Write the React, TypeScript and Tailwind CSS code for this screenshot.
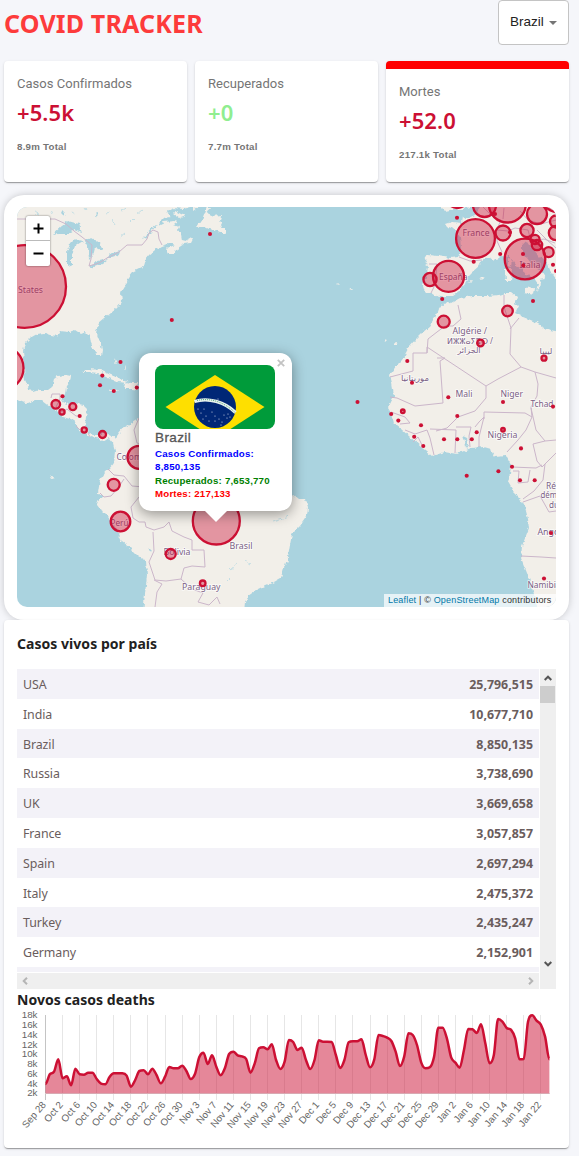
import React from "react";

const stats = [
  { title: "Casos Confirmados", value: "+5.5k", total: "8.9m Total", color: "text-[#cc1034]", active: false },
  { title: "Recuperados", value: "+0", total: "7.7m Total", color: "text-[#90ee90]", active: false },
  { title: "Mortes", value: "+52.0", total: "217.1k Total", color: "text-[#cc1034]", active: true },
];

const countries: [string, string][] = [
  ["USA", "25,796,515"],
  ["India", "10,677,710"],
  ["Brazil", "8,850,135"],
  ["Russia", "3,738,690"],
  ["UK", "3,669,658"],
  ["France", "3,057,857"],
  ["Spain", "2,697,294"],
  ["Italy", "2,475,372"],
  ["Turkey", "2,435,247"],
  ["Germany", "2,152,901"],
];

const LAND = [
  // North and Central America
  "M10 200L205 200L204 207L191 207L183 209L174 208L167 211L170 217L164 218L158 224L153 227L147 234L143 240L147 238L150 233L156 226L164 222L174 221L178 222L174 225L179 227L177 231L181 234L182 240L186 241L188 237L193 239L191 243L184 244L178 248L174 254L168 254L166 250L170 246L175 244L168 244L162 246L155 250L149 255L146 259L144 266L138 269L132 272L128 277L127 282L123 287L121 293L122 301L117 307L110 313L104 318L98 323L96 332L100 342L102 350L101 356L97 356L94 350L91 343L90 336L86 332L81 334L75 330L69 332L60 331L57 336L51 335L45 333L37 334L30 338L25 343L23 352L24 360L24 370L25 380L29 388L33 392L39 390L48 390L52 387L54 379L58 376L66 375L71 376L70 382L67 386L66 394L63 398L62 402L67 404L75 403L83 405L87 409L86 417L85 425L88 432L94 435L100 433L107 433L113 436L115 439L119 433L123 428L127 426L133 422L139 418L180 415L292 494L298 499L305 499L308 507L307 516L300 526L292 534L290 545L288 557L284 568L281 578L274 582L263 587L255 591L248 596L245 602L244 612L143 612L145 594L147 575L146 561L139 557L130 548L122 542L117 530L111 520L104 513L97 504L99 499L103 497L98 493L100 480L105 472L109 469L114 463L115 451L113 443L109 438L103 442L99 439L91 437L86 433L80 431L76 423L70 419L63 417L57 410L50 407L42 401L35 401L27 404L17 400L10 400Z",
  // Europe
  "M480 200L480 208L475 215L466 219L463 217L462 223L452 222L446 224L448 227L455 230L460 237L461 249L458 257L450 258L438 256L428 255L425 260L428 266L427 275L423 286L425 293L432 293L438 297L444 296L453 296L460 291L464 285L466 278L471 273L479 266L482 260L487 257L496 260L503 255L509 256L515 265L522 267L527 275L534 278L538 284L536 291L541 285L540 279L546 278L541 271L535 268L527 258L522 252L522 245L528 242L532 248L540 257L547 262L550 270L556 279L565 280L565 200Z",
  // Africa
  "M442 304L451 303L460 298L472 296L487 296L499 295L506 293L512 293L517 297L515 304L518 307L515 313L523 317L533 321L543 327L550 330L565 333L565 612L538 612L533 590L527 573L521 558L522 546L529 528L528 519L525 507L520 498L513 491L508 482L510 474L511 465L506 456L495 457L490 449L483 447L471 448L457 454L445 452L432 456L421 447L410 437L401 429L393 423L391 413L388 408L394 396L392 383L390 375L396 366L402 360L409 347L416 339L422 333L430 326L435 318L438 310Z",
  // Islands
  "M197 227L203 218L207 207L211 207L207 213L214 216L221 215L220 221L223 224L221 228L226 228L226 235L222 233L216 230L209 229L205 227Z",
  "M193 206L197 207L193 210Z M175 211L185 216L180 218L173 213Z M198 208L193 207L190 203L199 200Z",
  "M82 372L88 369L100 370L111 375L121 379L130 383L118 382L108 378L98 373L89 372Z",
  "M125 383L138 383L139 390L132 389L124 389Z M110 389L118 390L115 392L109 391Z",
  "M505 269L512 269L511 281L506 281Z M508 258L512 259L511 267L508 265Z M525 289L535 288L534 295L525 293Z",
  "M441 207L445 211L455 209L464 209L469 207L469 200L441 200Z",
  "M114 361L115 358L117 364Z M125 364L126 368L124 370Z M467 283L472 280L473 281Z M478 280L483 277L484 279Z",
  "M50 478L52 475L54 479L51 480Z M336 284L338 283L340 285Z M349 289L353 289L352 290Z M384 341L386 339L387 342Z M395 342L399 345L395 345Z",
].join(" ");

const WATER = [
  "M52 235L62 226L68 221L79 224L82 233L74 230L68 234L59 234Z",
  "M67 266L67 252L70 244L75 239L83 241L75 246L72 255L72 264Z",
  "M84 240L92 238L100 243L103 250L95 248L93 256L89 260L88 247Z",
  "M88 266L98 261L108 259L102 264L90 268Z",
  "M106 258L110 254L120 251L118 256L112 258Z",
  "M62 211L65 214L64 216L61 213Z M95 215L97 218L98 212Z M32 223L34 229L32 233Z",
  "M463 436L467 438L468 445L466 448L465 441Z M148 547L152 551L150 552Z",
].join(" ");

const BORDERS = [
  "M17 219L55 219L66 224L74 231L82 237L92 245L91 259L89 266L99 263L107 258L119 252L127 245L142 245L147 239L149 233L153 230L158 232L159 239L162 245",
  "M51 398L52 394L60 394L60 399L56 407L62 412M62 412L67 409L76 416L80 416M76 426L80 430M88 433L90 437",
  "M139 418L134 430L137 443L148 446M108 469L114 475L124 476L132 486L144 487M124 479L118 488L111 496L104 497L100 493M139 497L131 507L133 518L139 522L145 522L146 527L154 530M154 530L164 527L169 522L172 531L184 537L192 540L192 550L204 550L205 567L192 566L184 568L181 579L166 581L155 580L149 562L154 551L153 532",
  "M154 580L162 584L157 592L155 607M181 579L192 589L203 593L198 602L209 605L217 597L220 604",
  "M459 257L470 261L482 260M429 264L437 264L435 285L431 293M483 207L494 218L501 220L496 231L497 241L502 252M497 230L508 231L515 228L528 230L531 241M520 211L528 220L541 224L556 220M537 230L547 240L556 248M531 241L544 239L555 243M504 208L503 219",
  "M458 305L461 319L453 326L445 326L437 332L428 339L427 353L413 353L413 371L390 377M427 347L486 386L498 379L521 367L535 372L556 378M504 295L504 307L511 328L510 354L521 367M510 329L519 318M427 353L427 347",
  "M437 358L445 358L440 361L443 403L415 406L397 398M486 386L486 398L475 411L458 417L447 428L436 431M397 398L390 397M391 412L405 417L410 423L400 424M405 430L415 434L427 430L430 438L434 455M413 442L418 437L423 447M430 429L456 430L455 453M456 427L471 427L469 436L470 447M475 427L479 422L484 417L479 437L479 447M484 419L484 412L525 413L532 417L526 430L518 440L507 452M532 417L531 407L537 396L538 384L535 372",
  "M531 408L536 430L545 441L556 440M545 441L533 444L537 461L542 467L556 453M512 467L536 468L542 465M513 471L519 471L518 483L528 482L530 470M523 502L540 496L544 503L549 512L556 511M521 556L541 557L556 558M545 464L543 480L534 491L523 499",
].join(" ");

// x, y, radius
const circles: [number, number, number][] = [
  [24.7, 286.5, 41.3], [1.3, 368, 22.2], [216.3, 521, 23.5], [139, 457.3, 11.5], [113.7, 484.8, 6],
  [120.5, 521.5, 9.8], [170.7, 554, 5], [202.7, 583.3, 2.8], [55.8, 404.3, 4.3], [62, 412, 2.6],
  [72.8, 406.7, 3.5], [84.2, 430, 2.6], [102.5, 434.5, 3.5], [475.5, 238.5, 19.4], [448.5, 276.3, 15.5],
  [430, 279.5, 6.6], [525, 259, 20.3], [507.3, 204, 18.5], [484.5, 205.5, 11.5], [503, 233, 7.5],
  [457.3, 197, 11], [537, 214, 10], [527, 230.5, 6.6], [535, 239.5, 4.6], [537, 245, 5.2],
  [548.6, 252.2, 5], [556, 233, 7.2], [556, 221.5, 6], [562, 187, 26], [443.7, 321.7, 6],
  [507.5, 311, 5.3], [480.5, 343, 3.3], [544, 358.2, 2.5], [402.8, 411.3, 1.8], [503, 429.8, 1.8],
];

const dots: [number, number][] = [
  [210, 234], [171.8, 320], [120.5, 362], [102.3, 375.6], [100, 385.3], [113.8, 391], [136.8, 387.6],
  [62.5, 396.2], [79.7, 416], [357.5, 402], [457, 217.8], [495, 214], [500.2, 254], [523, 254],
  [523.3, 265.6], [473.7, 261.8], [442.2, 299], [533, 301], [553, 264.8], [556, 271], [407.3, 361],
  [412, 382.8], [448.3, 397.3], [391.2, 414], [398.3, 420.6], [421, 425.3], [457.3, 416], [414.2, 436.8],
  [423.3, 446], [444, 439.2], [457.3, 439.2], [471.8, 439.2], [476.7, 432.3], [503, 402], [553, 406.6],
  [521, 448.4], [512, 466.7], [498.4, 471.3], [466.7, 475.8], [520, 480.3], [534.7, 480.3],
  [551, 533], [544, 578.5], [510, 232.2],
];

// label, x, baseline, width
const labels: [string, number, number, number][] = [
  ["States", 18, 292.5, 25], ["France", 462.5, 236, 27], ["España", 439, 279.5, 28.5], ["Italia", 519.5, 268, 21],
  ["Algérie /", 452.5, 334, 34.5], ["Mali", 455.5, 397, 17], ["Niger", 500.5, 397, 22.5], ["Tchad", 530.5, 407, 23],
  ["Nigeria", 487.5, 438, 30], ["Ré", 546, 488.5, 10], ["dém", 540.5, 498, 16.5], ["du", 549, 507.5, 10],
  ["Angola", 537.5, 534.5, 29], ["Namibia", 527.5, 587.5, 33], ["Colombia", 116.5, 460, 37], ["Perú", 110.5, 526, 18],
  ["Bolivia", 163.5, 555, 27], ["Paraguay", 182, 589.5, 38.5], ["Brasil", 229.5, 549, 23],
];

function WorldMap() {
  return (
    <svg viewBox="17 207 539 400" width="539" height="400" className="block">
      <defs>
        <filter id="coast" x="0" y="0" width="1" height="1">
          <feTurbulence type="fractalNoise" baseFrequency="0.22" numOctaves="2" seed="4" />
          <feDisplacementMap in="SourceGraphic" scale="5" xChannelSelector="R" yChannelSelector="G" />
        </filter>
      </defs>
      <rect x="17" y="207" width="539" height="400" fill="#aad3df" />
      <g filter="url(#coast)">
        <path d={LAND} fill="#f2efe9" />
        <path d={WATER} fill="#aad3df" />
        <path d="M35 212l5 2M50 210l2 4M72 212l3 2M85 208l2 3M105 214l4-2M112 220l3 5M122 210l5-3M130 222l4-4M137 214l5-4M120 237l4-3M273 522l7-2l9-3M225 582l6-6M230 570l8-7M244 560l6 4" stroke="#b7d9e2" strokeWidth="0.8" fill="none" />
      </g>
      <path d={BORDERS} fill="none" stroke="#cbb6ca" strokeWidth="1" strokeLinejoin="round" />
      <g fill="#7b5f85" stroke="#fff" strokeOpacity="0.7" strokeWidth="1.6" paintOrder="stroke" fontSize="8" fontFamily='"Noto Sans", "DejaVu Sans", sans-serif'>
        {labels.map(([t, x, y, w]) => (
          <text key={t} x={x} y={y} textLength={w} lengthAdjust="spacingAndGlyphs">{t}</text>
        ))}
        <text x="447" y="343.5" textLength="46" lengthAdjust="spacingAndGlyphs">ⵍⵣⵣⴰⵢⴻⵔ /</text>
        <text x="469" y="353" textAnchor="middle" fontFamily='"DejaVu Sans", sans-serif' fontSize="8">الجزائر</text>
        <text x="546" y="354" textAnchor="middle" fontFamily='"DejaVu Sans", sans-serif' fontSize="8.500">ليبيا</text>
        <text x="415" y="381" textAnchor="middle" fontFamily='"DejaVu Sans", sans-serif' fontSize="8.500">موريتانيا</text>
      </g>
      <g fill="#cc1034" fillOpacity="0.4" stroke="#cc1034" strokeWidth="2.3">
        {circles.map(([x, y, r], i) => <circle key={i} cx={x} cy={y} r={r} />)}
      </g>
      <g fill="#cc1034">
        {dots.map(([x, y], i) => <circle key={i} cx={x} cy={y} r="2.05" />)}
      </g>
    </svg>
  );
}

function Flag() {
  return (
    <svg width="120" height="64" viewBox="0 0 120 64" className="block rounded-[8px]">
      <rect width="120" height="64" fill="#009b3a" />
      <path d="M60 10L109.500 42L60 74L10.500 42Z" fill="#fedf00" />
      <circle cx="60" cy="42" r="21" fill="#002776" />
      <path d="M39.500 36.500C53 32 70 37 80.500 47.500" fill="none" stroke="#e8f3ee" strokeWidth="3.2" />
      <path d="M42 35.500C55 32.500 69 37 79.500 47" fill="none" stroke="#56a883" strokeWidth="1" strokeDasharray="1 1" />
      <g fill="#d7deed">
        {[[43, 44], [46, 48], [49, 44], [51, 51], [54, 56], [57, 47], [60, 51], [60, 56], [64, 54], [67, 57], [69, 50], [73, 49], [72, 53], [75, 52], [66, 60], [63, 34], [48, 54]].map(([x, y]) => (
          <circle key={`${x}-${y}`} cx={x} cy={y} r="0.6" />
        ))}
      </g>
    </svg>
  );
}

function Popup() {
  return (
    <div className="absolute left-[122px] top-[146px] h-[170px] w-[153px]">
      <div className="relative h-[158px] rounded-[12px] bg-white px-4 pt-[12px] shadow-[0_3px_14px_rgba(0,0,0,0.4)]">
        <svg className="absolute right-[7px] top-[6px]" width="8" height="8" viewBox="0 0 8 8">
          <path d="M0.800 0.800L7.200 7.200M7.200 0.800L0.800 7.200" stroke="#c3c3c3" strokeWidth="1.8" />
        </svg>
        <Flag />
        <div className="whitespace-nowrap font-['Liberation_Sans',sans-serif] font-bold">
          <div className="h-[18px] text-[13.500px] font-medium leading-[17px] tracking-[0.400px] text-[#555] [-webkit-text-stroke:0.300px_#555]">Brazil</div>
          <div className="text-[9.700px] leading-[13px] tracking-[0.240px] text-[#00f]">Casos Confirmados:<br />8,850,135</div>
          <div className="pt-[1px] text-[9.700px] leading-[13px] tracking-[0.200px] text-[#008000]">Recuperados: 7,653,770</div>
          <div className="text-[9.700px] leading-[13px] tracking-[0.200px] text-[#f00]">Mortes: 217,133</div>
        </div>
      </div>
      <div className="absolute left-[65px] top-[157px] h-[12px] w-[24px] bg-white [clip-path:polygon(0_0,100%_0,50%_100%)]" />
    </div>
  );
}

// Vertical plot positions, one per day from Sep 28, in thirds of a pixel.
const series = [
  372, 343, 335, 298, 355, 349, 376, 326, 343, 344, 338, 338, 357, 371, 373, 351, 340, 340, 340, 347,
  380, 360, 333, 331, 343, 326, 345, 370, 350, 321, 325, 325, 317, 333, 357, 342, 292, 278, 312, 286,
  320, 346, 325, 282, 275, 286, 289, 297, 338, 310, 265, 262, 268, 253, 300, 327, 305, 240, 246, 270,
  263, 300, 327, 300, 241, 245, 245, 246, 285, 324, 300, 247, 244, 244, 238, 285, 322, 298, 225, 228,
  233, 243, 275, 318, 290, 220, 225, 255, 308, 325, 322, 290, 203, 203, 235, 292, 308, 323, 270, 207,
  208, 219, 193, 250, 310, 285, 177, 185, 204, 209, 235, 298, 297, 185, 166, 182, 194, 230, 298,
];
const STEP = 4.27;
const points = series.map((v, i) => [28.5 + i * STEP, v / 3 - 50]);

function smoothPath(p: number[][]) {
  const tangent = (i: number) => {
    if (i === 0 || i === p.length - 1) return 0;
    const a = p[i][1] - p[i - 1][1];
    const b = p[i + 1][1] - p[i][1];
    if (a * b <= 0) return 0;
    const m = (a + b) / 2;
    return Math.sign(m) * Math.min(Math.abs(m), 3 * Math.abs(a), 3 * Math.abs(b));
  };
  let d = `M${p[0][0]} ${p[0][1]}`;
  for (let i = 0; i < p.length - 1; i++) {
    const [x, y] = p[i];
    const [u, v] = p[i + 1];
    d += `C${x + STEP / 3} ${y + tangent(i) / 3} ${u - STEP / 3} ${v - tangent(i + 1) / 3} ${u} ${v}`;
  }
  return d;
}

const days = [
  "Sep 28", "Oct 2", "Oct 6", "Oct 10", "Oct 14", "Oct 18", "Oct 22", "Oct 26", "Oct 30", "Nov 3",
  "Nov 7", "Nov 11", "Nov 15", "Nov 19", "Nov 23", "Nov 27", "Dec 1", "Dec 5", "Dec 9", "Dec 13",
  "Dec 17", "Dec 21", "Dec 25", "Dec 29", "Jan 2", "Jan 6", "Jan 10", "Jan 14", "Jan 18", "Jan 22",
];

function Chart() {
  const line = smoothPath(points);
  return (
    <svg width="539" height="130" viewBox="0 0 539 130" className="block overflow-visible">
      {days.map((d, i) => (
        <rect key={d} x={Math.round(28 + i * STEP * 4)} y="5" width="1" height="85" fill={i ? "#e6e6e6" : "#c4c4c4"} />
      ))}
      <rect x="28" y="83" width="505" height="1" fill="#ddd" />
      <path d={`${line}L532.400 83.500L28.500 83.500Z`} fill="#cc1034" fillOpacity="0.5" />
      <path d={line} fill="none" stroke="#cc1034" strokeWidth="2.5" strokeLinejoin="round" />
      <g fill="#666" fontSize="9.800" fontFamily='"Liberation Sans", Arial, sans-serif'>
        {[18, 16, 14, 12, 10, 8, 6, 4, 2].map((k, i) => (
          <text key={k} x="20.500" y={8.3 + i * 9.75} textAnchor="end">{k}k</text>
        ))}
        {days.map((d, i) => (
          <text key={d} textAnchor="end" transform={`translate(${29.5 + i * STEP * 4} 95) rotate(-50)`}>{d}</text>
        ))}
      </g>
    </svg>
  );
}

function Chevron({ className }: { className: string }) {
  return (
    <svg width="8" height="6" viewBox="0 0 8 6" className={className} fill="none" stroke="currentColor" strokeWidth="2">
      <path d="M0.700 5L4 1.700L7.300 5" />
    </svg>
  );
}

const paper = "rounded-[4px] bg-white shadow-[0_2px_1px_-1px_rgba(0,0,0,0.2),0_1px_1px_0_rgba(0,0,0,0.14),0_1px_3px_0_rgba(0,0,0,0.12)]";

export default function App() {
  return (
    <div className="h-[1156px] w-[579px] overflow-hidden bg-[#f5f6fa] pl-1 pr-[10px] font-['Noto_Sans',sans-serif]">
      <header className="flex h-[45px] items-start justify-between">
        <h1 className="pt-[5px] text-[25px] font-bold leading-[36px] tracking-[0.170px] text-[#fd3b3b]">COVID TRACKER</h1>
        <div className="flex h-[45px] w-[71px] items-center rounded-[4px] border border-[#c4c4c4] bg-white pl-[11px] font-['Liberation_Sans',sans-serif] text-[13.500px] text-[#222]">
          <span className="w-[39px]">Brazil</span>
          <svg width="8" height="4" viewBox="0 0 8 4"><path d="M0 0H8L4 4Z" fill="#757575" /></svg>
        </div>
      </header>

      <section className="mt-4 grid grid-cols-3 gap-2">
        {stats.map((s) => (
          <article key={s.title} className={`h-[121px] overflow-hidden px-[13px] pt-[14px] ${paper} ${s.active ? "border-t-8 border-[#f00]" : ""}`}>
            <p className="font-['Roboto',sans-serif] text-[13px] leading-[18px] tracking-[0.020px] text-[#757575]">{s.title}</p>
            <p className={`mt-[5px] text-[22px] font-semibold leading-[28px] tracking-[0.100px] ${s.color}`}>{s.value}</p>
            <p className="mt-[14px] font-['Liberation_Sans',sans-serif] text-[9.700px] font-bold leading-[13px] tracking-[0.250px] text-[#757575]">{s.total}</p>
          </article>
        ))}
      </section>

      <section className="mt-[13px] h-[425px] rounded-[20px] bg-white px-[13px] pt-3 shadow-[0_0_8px_-1px_rgba(0,0,0,0.25)]">
        <div className="relative h-[400px] overflow-hidden rounded-[10px]">
          <WorldMap />
          <div className="absolute left-[9px] top-[9px] flex h-[50px] w-[24px] flex-col overflow-hidden rounded-[2px] bg-white shadow-[0_0_2px_rgba(0,0,0,0.6)]">
            <div className="flex h-[25px] items-center justify-center border-b border-[#bbb]">
              <svg width="11" height="11" viewBox="0 0 11 11"><path d="M5.500 0.500V10.500M0.500 5.500H10.500" stroke="#000" strokeWidth="2" /></svg>
            </div>
            <div className="flex h-[25px] items-center justify-center">
              <svg width="11" height="11" viewBox="0 0 11 11"><path d="M0.500 5.500H10.500" stroke="#000" strokeWidth="2" /></svg>
            </div>
          </div>
          <Popup />
          <div className="absolute bottom-0 right-0 flex h-[13px] w-[172px] items-center whitespace-pre bg-white/70 pl-1 font-['Liberation_Sans',sans-serif] text-[9px] tracking-[0.180px] text-[#333]">
            <span className="text-[#0078a8]">Leaflet</span> | © <span className="text-[#0078a8]">OpenStreetMap</span> contributors
          </div>
        </div>
      </section>

      <section className={`h-[528px] px-[13px] pt-[13px] ${paper}`}>
        <h3 className="h-[36px] text-[14px] font-bold leading-[22px] tracking-[0.040px] text-[#212121]">Casos vivos por país</h3>
        <div className="grid h-[320px] grid-cols-[522px_16px] gap-x-px">
          <div className="flex flex-col">
            <div className="h-[303px] overflow-hidden text-[12.400px] text-[#6a5d5d]">
              {countries.map(([name, count], i) => (
                <div key={name} className={`flex h-[29.8px] items-center justify-between px-[6px] pt-[3px] ${i % 2 ? "bg-white" : "bg-[#f3f2f8]"}`}>
                  <span className="tracking-[-0.100px]">{name}</span>
                  <strong className="font-bold">{count}</strong>
                </div>
              ))}
              <div className="h-[29.8px] bg-[#f3f2f8]" />
            </div>
            <div className="mt-px flex h-4 items-center justify-between bg-[#efefef] px-1 text-[#b5b5b5]">
              <Chevron className="-rotate-90" />
              <Chevron className="rotate-90" />
            </div>
          </div>
          <div className="flex flex-col items-center bg-[#efefef] text-[#555]">
            <Chevron className="mt-[6px]" />
            <div className="mr-px mt-[5px] h-[17px] w-[15px] bg-[#cdcdcd]" />
            <Chevron className="mt-[258px] rotate-180" />
          </div>
        </div>
        <h3 className="h-[21px] text-[14px] font-bold leading-[22px] tracking-[0.040px] text-[#212121]">Novos casos deaths</h3>
        <Chart />
      </section>
    </div>
  );
}
